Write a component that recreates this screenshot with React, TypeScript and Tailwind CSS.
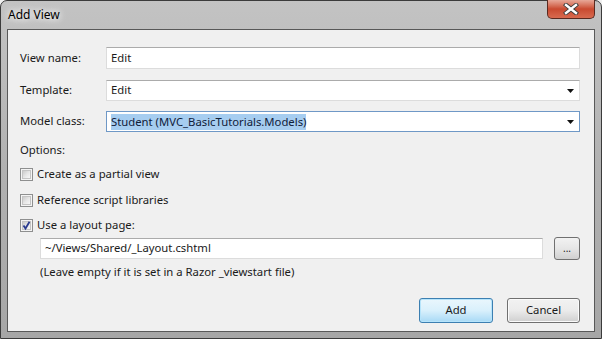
import React from "react"

const font = { fontFamily: '"Noto Sans", "Open Sans", sans-serif' }

function Arrow() {
  return (
    <svg width="7" height="4" viewBox="0 0 7 4" className="absolute right-[5px] top-1/2 -translate-y-1/2">
      <path d="M0 0H7L3.5 4Z" fill="#111" />
    </svg>
  )
}

function CheckBox({ checked = false }: { checked?: boolean }) {
  return (
    <div className="relative w-[13px] h-[13px] border border-[#8e8f8f] bg-[#f4f4f4] p-[1px]">
      <div className="w-full h-full border border-[#c4c4c4] bg-gradient-to-br from-[#cbcbcb] via-[#e6e6e6] to-[#f7f7f7]" />
      {checked && (
        <svg width="11" height="11" viewBox="0 0 11 11" className="absolute left-[0px] top-[0px]">
          <path d="M2.5 5.5L4.5 8.5L8.5 1.8" fill="none" stroke="#2a3b8f" strokeWidth="1.8" />
        </svg>
      )}
    </div>
  )
}

function Field({ children, dropdown = false, focused = false }: { children?: React.ReactNode; dropdown?: boolean; focused?: boolean }) {
  return (
    <div
      className={
        "relative flex-1 h-full bg-white border flex items-center pl-[4px] text-[11.3px] text-[#1a1a1a] " +
        (focused ? "border-[#6f98c6]" : "border-[#dcdcdc] border-t-[#ababab]")
      }
    >
      {children}
      {dropdown && <Arrow />}
    </div>
  )
}

export default function App() {
  return (
    <div className="w-[602px] h-[339px] bg-[#f0f0f0]" style={font}>
      <div className="w-[602px] h-[339px] rounded-t-[7px] border border-[#3b3b3b] bg-gradient-to-b from-[#c3c3c3] via-[#b1b1b1] to-[#a6a6a6] flex flex-col">
        <div className="relative h-[28px] shrink-0">
          <span className="absolute left-[7px] top-[5px] text-[12px] text-black [text-shadow:0_0_6px_#ffffff,0_0_10px_#ffffff]">
            Add View
          </span>
          <div className="absolute right-[6px] top-[-1px] w-[48px] h-[19px] rounded-b-[5px] border border-[#5a2a20] border-t-0 bg-gradient-to-b from-[#e7a898] via-[#c94a30] to-[#d86a4f] flex items-center justify-center">
            <svg width="16" height="12" viewBox="0 0 16 12">
              <path d="M3 2L13 10M13 2L3 10" stroke="#3b3b3b" strokeWidth="4.2" strokeLinecap="square" />
              <path d="M3 2L13 10M13 2L3 10" stroke="#ffffff" strokeWidth="2.4" strokeLinecap="square" />
            </svg>
          </div>
        </div>
        <div className="mx-[6px] mb-[6px] flex-1 border border-[#585858] bg-[#f0f0f0] flex flex-col pl-[12px] pr-[14px] pt-[17px] text-[11.3px] text-[#1a1a1a]">
          <div className="flex items-center h-[22px]">
            <span className="w-[86px]">View name:</span>
            <Field>Edit</Field>
          </div>
          <div className="flex items-center h-[21px] mt-[11px]">
            <span className="w-[86px]">Template:</span>
            <Field dropdown>Edit</Field>
          </div>
          <div className="flex items-center h-[21px] mt-[10px]">
            <span className="w-[86px]">Model class:</span>
            <Field dropdown focused>
              <span className="bg-[#a6cdf0] text-[#10203a] leading-[16px]">Student (MVC_BasicTutorials.Models)</span>
            </Field>
          </div>
          <div className="h-[16px] mt-[10px] flex items-center">Options:</div>
          <div className="h-[16px] mt-[8px] flex items-center gap-[4px]">
            <CheckBox />
            <span>Create as a partial view</span>
          </div>
          <div className="h-[16px] mt-[10px] flex items-center gap-[4px]">
            <CheckBox />
            <span>Reference script libraries</span>
          </div>
          <div className="h-[16px] mt-[9px] flex items-center gap-[4px]">
            <CheckBox checked />
            <span>Use a layout page:</span>
          </div>
          <div className="flex items-center h-[21px] mt-[5px] pl-[20px] gap-[11px]">
            <Field>~/Views/Shared/_Layout.cshtml</Field>
            <button className="w-[26px] h-[23px] rounded-[3px] border border-[#707070] bg-gradient-to-b from-[#f2f2f2] via-[#e6e6e6] to-[#d0d0d0] text-[10px] leading-[10px] pb-[2px]">
              ...
            </button>
          </div>
          <div className="h-[16px] mt-[5px] pl-[20px] flex items-center">
            (Leave empty if it is set in a Razor _viewstart file)
          </div>
          <div className="flex justify-end gap-[14px] mt-[18px]">
            <button className="w-[74px] h-[25px] rounded-[3px] border border-[#3c7fb1] bg-gradient-to-b from-[#eaf6fd] via-[#d9f0fc] to-[#a7d9f5] text-[11.3px] text-[#1a1a1a] shadow-[inset_0_0_0_1px_#b6e4fb]">
              Add
            </button>
            <button className="w-[73px] h-[25px] rounded-[3px] border border-[#707070] bg-gradient-to-b from-[#f2f2f2] via-[#ebebeb] to-[#cfcfcf] text-[11.3px] text-[#1a1a1a] shadow-[inset_0_0_0_1px_#fbfbfb]">
              Cancel
            </button>
          </div>
        </div>
      </div>
    </div>
  )
}
